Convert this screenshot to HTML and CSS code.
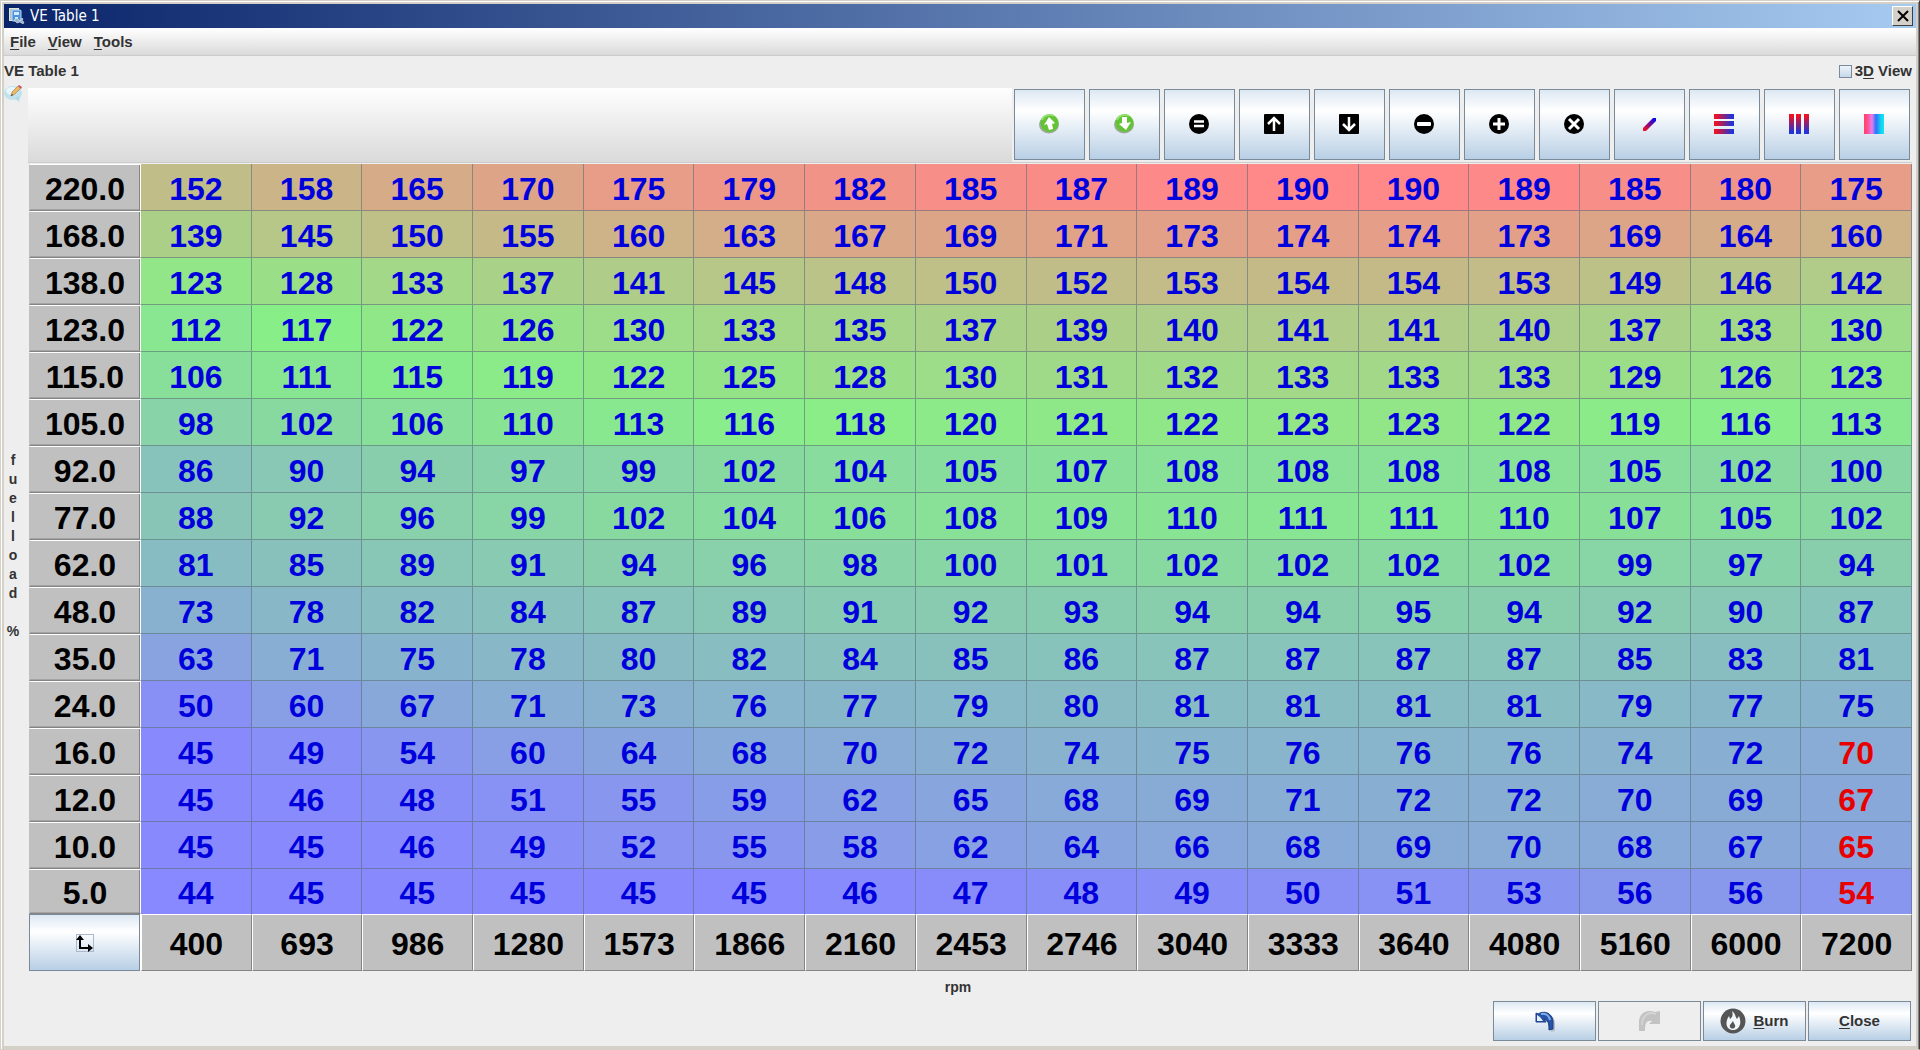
FILE: index.html
```
<!DOCTYPE html>
<html lang="en">
<head>
<meta charset="utf-8">
<title>VE Table 1</title>
<link rel="stylesheet" href="styles.css">
</head>
<body>
<div class="window">
  <header class="titlebar">
    <svg class="app-icon" width="16" height="16" viewBox="0 0 16 16" aria-hidden="true">
      <rect x="0" y="0" width="10" height="13" fill="#dfe6d8"/>
      <rect x="1" y="1" width="8" height="11" fill="#b5c4c0"/>
      <rect x="3" y="2" width="9" height="11" rx="1" fill="#4c92dc" stroke="#b9dcf8"/>
      <path d="M5 4h5v3H5zM6 9h3v2H6z" fill="#d5ebff"/>
      <path d="M5 12l3-2 3 3 2-3 1 1-1 2 2 1-1 2-3-2-3 1z" fill="#9db6cf" stroke="#dfe9f2" stroke-width=".6"/>
    </svg>
    <h1 class="titlebar-text">VE Table 1</h1>
    <button class="window-close" type="button" aria-label="Close window">
      <svg width="12" height="12" viewBox="0 0 12 12"><path d="M1 1l10 10M11 1L1 11" stroke="#000" stroke-width="2"/></svg>
    </button>
  </header>

  <nav class="menubar">
    <button type="button"><u>F</u>ile</button>
    <button type="button"><u>V</u>iew</button>
    <button type="button"><u>T</u>ools</button>
  </nav>

  <div class="heading">
    <h2>VE Table 1</h2>
    <label class="check"><input type="checkbox"><span>3<u>D</u> View</span></label>
  </div>

  <main class="editor">
    <aside class="side">
      <svg class="note-icon" width="19" height="18" viewBox="0 0 19 18" aria-hidden="true">
        <ellipse cx="9" cy="9" rx="9" ry="7" fill="#bfe2ee"/>
        <path d="M11 14l4 4 1-6z" fill="#aedbea"/>
        <ellipse cx="8" cy="7" rx="6" ry="4" fill="#e8f7fb"/>
        <path d="M7 12l1-4 6-6 3 2-6 6z" fill="#edb968" stroke="#9b7444" stroke-width=".6"/>
        <path d="M14 2l1-1 3 2-1 2z" fill="#c8565c"/>
        <path d="M7 12l1-2 1 1z" fill="#333"/>
      </svg>
      <div class="y-label"><span>f</span><span>u</span><span>e</span><span>l</span><span>l</span><span>o</span><span>a</span><span>d</span><span></span><span>%</span></div>
    </aside>

    <div class="grid-area">
      <div class="toolbar">
        <button class="tool" type="button" aria-label="Load table">
          <svg width="20" height="20" viewBox="0 0 20 20"><ellipse cx="10" cy="10.500" rx="10" ry="9" fill="#9aab94"/><ellipse cx="10.500" cy="9" rx="9" ry="8.800" fill="#62c334"/><path d="M3 6a8 7 0 0 1 12-4" fill="none" stroke="#94e070" stroke-width="2"/><path d="M10 3l6 6-2 1-1-1 1 6-4 1-2-6-3 1z" fill="#fff"/></svg>
        </button>
        <button class="tool" type="button" aria-label="Save table">
          <svg width="20" height="20" viewBox="0 0 20 20"><ellipse cx="10" cy="10.500" rx="10" ry="9" fill="#9aab94"/><ellipse cx="10.500" cy="9" rx="9" ry="8.800" fill="#62c334"/><path d="M3 6a8 7 0 0 1 12-4" fill="none" stroke="#94e070" stroke-width="2"/><path d="M8 3h5v6l4-1-5 8-7-6 3-1z" fill="#fff"/></svg>
        </button>
        <button class="tool" type="button" aria-label="Set equal">
          <svg width="20" height="20" viewBox="0 0 20 20"><circle cx="10" cy="10" r="10"/><path d="M5 7.500h10M5 12h10" stroke="#fff" stroke-width="2.500"/></svg>
        </button>
        <button class="tool" type="button" aria-label="Increment">
          <svg width="20" height="20" viewBox="0 0 20 20"><rect width="20" height="20" rx="1"/><path d="M10 17V5M4 10l6-6 6 6" fill="none" stroke="#fff" stroke-width="2.500"/></svg>
        </button>
        <button class="tool" type="button" aria-label="Decrement">
          <svg width="20" height="20" viewBox="0 0 20 20"><rect width="20" height="20" rx="1"/><path d="M10 3v12M4 10l6 6 6-6" fill="none" stroke="#fff" stroke-width="2.500"/></svg>
        </button>
        <button class="tool" type="button" aria-label="Subtract">
          <svg width="20" height="20" viewBox="0 0 20 20"><circle cx="10" cy="10" r="10"/><rect x="3" y="8" width="14" height="4" rx="1" fill="#fff"/></svg>
        </button>
        <button class="tool" type="button" aria-label="Add">
          <svg width="20" height="20" viewBox="0 0 20 20"><circle cx="10" cy="10" r="10"/><path d="M10 4v12M4 10h12" stroke="#fff" stroke-width="3"/></svg>
        </button>
        <button class="tool" type="button" aria-label="Multiply">
          <svg width="20" height="20" viewBox="0 0 20 20"><circle cx="10" cy="10" r="10"/><path d="M5 5l10 10M15 5L5 15" stroke="#fff" stroke-width="3"/></svg>
        </button>
        <button class="tool" type="button" aria-label="Interpolate">
          <svg width="20" height="20" viewBox="0 0 20 20"><defs><linearGradient id="diag" x1="0" y1="1" x2="1" y2="0"><stop offset=".1" stop-color="#f01020"/><stop offset=".9" stop-color="#0c08ee"/></linearGradient></defs><path d="M4 14L14 4h3v3L7 17H4z" fill="url(#diag)"/></svg>
        </button>
        <button class="tool" type="button" aria-label="Interpolate horizontally">
          <svg width="20" height="20" viewBox="0 0 20 20"><defs><linearGradient id="across"><stop offset=".1" stop-color="#ee1222"/><stop offset=".9" stop-color="#2034d8"/></linearGradient></defs><path d="M0 0h20v5H0zM0 7h20v5H0zM0 15h20v5H0z" fill="url(#across)"/></svg>
        </button>
        <button class="tool" type="button" aria-label="Interpolate vertically">
          <svg width="20" height="20" viewBox="0 0 20 20"><defs><linearGradient id="down" x2="0" y2="1"><stop offset=".1" stop-color="#ee1222"/><stop offset=".9" stop-color="#2034d8"/></linearGradient></defs><path d="M0 0h5v20H0zM7 0h5v20H7zM15 0h5v20h-5z" fill="url(#down)"/></svg>
        </button>
        <button class="tool" type="button" aria-label="Smooth">
          <svg width="20" height="20" viewBox="0 0 20 20"><defs><linearGradient id="rainbow"><stop offset="0" stop-color="#ff4468"/><stop offset=".15" stop-color="#ff4a88"/><stop offset=".4" stop-color="#e87cf0"/><stop offset=".6" stop-color="#2874f8"/><stop offset=".85" stop-color="#14d0f4"/><stop offset="1" stop-color="#10e8ee"/></linearGradient></defs><rect width="20" height="20" fill="url(#rainbow)"/></svg>
        </button>
      </div>

      <table class="map">
        <colgroup><col class="axis-col"><col span="16"></colgroup>
        <tbody id="map-body"></tbody>
        <tfoot><tr id="map-foot">
          <th class="corner"><button type="button" aria-label="Edit axes">
            <svg width="18" height="18" viewBox="0 0 18 18"><rect x=".5" y=".5" width="17" height="17" fill="none" stroke="#aab8c8"/><path d="M4 4v10h10" fill="none" stroke="#000" stroke-width="2"/><path d="M0 6l4-5 4 5zM12 10l5 4-5 4z"/></svg>
          </button></th>
        </tr></tfoot>
      </table>
    </div>
  </main>

  <footer class="bottom">
    <div class="x-label">rpm</div>
    <div class="actions">
      <button class="action" type="button" aria-label="Undo">
        <svg width="20" height="21" viewBox="0 0 20 21"><path d="M3 3C9 0 19 2 20 12v8l-4 1c0-6-2-11-8-11l3 3z" fill="#b9bfc6"/><path d="M1 2l2 1c6-4 14-1 15 7v8l-4 1c0-7-1-10-5-11l2 3H1z" fill="#2852a4" stroke="#1d3f8a"/><path d="M6 3c4-1 8 1 9 6" fill="none" stroke="#7fb0ee" stroke-width="2"/><path d="M2 4v6h6L5 6z" fill="#e4f0fc"/></svg>
      </button>
      <button class="action" type="button" aria-label="Redo" disabled>
        <svg width="23" height="22" viewBox="0 0 23 22"><path d="M22 1l-5 1C9-1 1 3 1 12v9h6c0-7 1-11 7-10l-3 3h11z" fill="#c3c3c3"/><path d="M18 4C10 1 4 6 4 15" fill="none" stroke="#d4d4d4" stroke-width="2"/></svg>
      </button>
      <button class="action" type="button">
        <svg width="26" height="26" viewBox="0 0 26 26"><circle cx="13" cy="13" r="12.500" fill="#555"/><path d="M12 3c4 3 3 6 5 8l2-3c2 5 2 10-2 13-3 2-7 1-9-1-3-4-1-9 1-12l1 3c3-2 3-5 2-8z" fill="#f4f7fa"/><path d="M13 13c1 3 3 4 2 6-1 2-4 2-5 0s1-3 3-6z" fill="#555"/></svg>
        <span><u>B</u>urn</span>
      </button>
      <button class="action" type="button"><span><u>C</u>lose</span></button>
    </div>
  </footer>
</div>
<script src="table.js"></script>
</body>
</html>
```
FILE: styles.css
```
* { box-sizing: border-box; }

body {
  margin: 0;
  background: #d4d0c8;
  color: #333;
  font: bold 15px/18px "Liberation Sans", Arial, sans-serif;
}

button { font: inherit; color: inherit; padding: 0; }
u { text-underline-offset: 2px; text-decoration-thickness: 1px; }

.window {
  min-height: 100vh;
  display: flex;
  flex-direction: column;
  padding: 3px;
  border: 1px solid #d4d0c8;
  border-right-color: #404040;
  box-shadow: inset 1px 1px #fff, inset -1px 0 #808080;
}

.titlebar {
  display: flex;
  align-items: center;
  gap: 5px;
  height: 24px;
  padding: 0 3px 0 5px;
  background: linear-gradient(90deg, #0a246a, #a6caf0);
}

.titlebar-text {
  flex: 1;
  margin: 0;
  color: #fff;
  font: 15px/18px "DejaVu Sans Condensed", "DejaVu Sans", sans-serif;
}

.window-close {
  display: grid;
  place-items: center;
  width: 21px;
  height: 20px;
  background: #d4d0c8;
  border: 1px solid #404040;
  border-top-color: #fff;
  border-left-color: #fff;
}

.menubar {
  display: flex;
  gap: 12px;
  height: 28px;
  padding: 0 6px;
  background: linear-gradient(#fff, #dadada);
  border-bottom: 1px solid #ccc;
}

.menubar button { background: none; border: 0; }

.heading {
  display: flex;
  align-items: center;
  justify-content: space-between;
  height: 32px;
  padding: 0 4px 2px 0;
  background: #eee;
}

.heading h2 { margin: 0; font: inherit; }

.check { display: flex; align-items: center; gap: 3px; }

.check input {
  appearance: none;
  width: 13px;
  height: 13px;
  margin: 0;
  border: 1px solid #7a8a99;
  background: linear-gradient(#eef4fa, #c4d8ea);
}

.editor {
  display: flex;
  background: #eee;
}

.side {
  display: flex;
  flex-direction: column;
  width: 24px;
}

.note-icon { margin-top: -4px; }

.y-label {
  flex: 1;
  display: flex;
  flex-direction: column;
  align-items: center;
  justify-content: center;
  padding: 18px 6px 0 0;
  font-size: 14px;
}

.y-label span { height: 19px; line-height: 19px; }

.grid-area {
  flex: 1;
  min-width: 0;
  padding-right: 4px;
}

.toolbar {
  display: flex;
  justify-content: flex-end;
  gap: 4px;
  padding: 1px 2px 2px;
  background: linear-gradient(#fff, #dadada);
  border-bottom: 1px solid #ccc;
}

.tool, .action, .corner button {
  display: flex;
  align-items: center;
  justify-content: center;
  gap: 7px;
  border: 1px solid #7a8a99;
  background: linear-gradient(#dde8f3, #fff 30%, #b8cfe5);
}

.tool {
  width: 71px;
  height: 71px;
  padding: 0 2px 2px 0;
  box-shadow: 0 0 0 2px #eee;
}

.map {
  width: 100%;
  table-layout: fixed;
  border-collapse: separate;
  border-spacing: 0;
  padding: 1px 0 0 1px;
  font: bold 32px/40px "Liberation Sans", Arial, sans-serif;
  text-align: center;
}

.axis-col { width: 112px; }

.map td, .map th { padding: 3px 0 0; height: 47px; }

.map tr:last-child td, .map tbody tr:last-child th { height: 45px; }

.map td {
  color: #0000dc;
  border-right: 1px solid rgba(90, 110, 120, .6);
  border-bottom: 1px solid rgba(90, 110, 120, .6);
}

.map tr:last-child td { border-bottom: 0; }

.map .flagged { color: #e80000; }

.map th {
  color: #000;
  background: #c0c0c0;
  border: 1px solid #848484;
  border-top-color: #fff;
  border-left-color: #fff;
}

.map tbody th {
  padding-top: 2px;
  border-left-color: #c0c0c0;
  box-shadow: inset -1px 0 #848484, inset 0 -1px #a4a4a4;
  border-right-color: #fff;
}

.map tfoot th { height: 57px; padding-top: 2px; }

.map .corner { padding: 0; border: 0; border-right: 1px solid #fff; }

.corner button { width: 100%; height: 57px; }

.bottom {
  flex: 1;
  padding: 7px 4px 5px 0;
  background: #eee;
}

.x-label { padding-bottom: 5px; text-align: center; font-size: 14px; }

.actions {
  display: flex;
  justify-content: flex-end;
  gap: 2px;
  padding-right: 1px;
}

.action { width: 103px; height: 40px; }

.action:disabled { background: #eee; }
```
FILE: table.js
```
const rpm = [400, 693, 986, 1280, 1573, 1866, 2160, 2453, 2746, 3040, 3333, 3640, 4080, 5160, 6000, 7200];

const rows = [
  ["220.0", 152, 158, 165, 170, 175, 179, 182, 185, 187, 189, 190, 190, 189, 185, 180, 175],
  ["168.0", 139, 145, 150, 155, 160, 163, 167, 169, 171, 173, 174, 174, 173, 169, 164, 160],
  ["138.0", 123, 128, 133, 137, 141, 145, 148, 150, 152, 153, 154, 154, 153, 149, 146, 142],
  ["123.0", 112, 117, 122, 126, 130, 133, 135, 137, 139, 140, 141, 141, 140, 137, 133, 130],
  ["115.0", 106, 111, 115, 119, 122, 125, 128, 130, 131, 132, 133, 133, 133, 129, 126, 123],
  ["105.0", 98, 102, 106, 110, 113, 116, 118, 120, 121, 122, 123, 123, 122, 119, 116, 113],
  ["92.0", 86, 90, 94, 97, 99, 102, 104, 105, 107, 108, 108, 108, 108, 105, 102, 100],
  ["77.0", 88, 92, 96, 99, 102, 104, 106, 108, 109, 110, 111, 111, 110, 107, 105, 102],
  ["62.0", 81, 85, 89, 91, 94, 96, 98, 100, 101, 102, 102, 102, 102, 99, 97, 94],
  ["48.0", 73, 78, 82, 84, 87, 89, 91, 92, 93, 94, 94, 95, 94, 92, 90, 87],
  ["35.0", 63, 71, 75, 78, 80, 82, 84, 85, 86, 87, 87, 87, 87, 85, 83, 81],
  ["24.0", 50, 60, 67, 71, 73, 76, 77, 79, 80, 81, 81, 81, 81, 79, 77, 75],
  ["16.0", 45, 49, 54, 60, 64, 68, 70, 72, 74, 75, 76, 76, 76, 74, 72, 70],
  ["12.0", 45, 46, 48, 51, 55, 59, 62, 65, 68, 69, 71, 72, 72, 70, 69, 67],
  ["10.0", 45, 45, 46, 49, 52, 55, 58, 62, 64, 66, 68, 69, 70, 68, 67, 65],
  ["5.0", 44, 45, 45, 45, 45, 45, 46, 47, 48, 49, 50, 51, 53, 56, 56, 54]
];

const LOW = 44, MID = 117, HIGH = 190;

// Blue at the low end, green in the middle, red at the high end.
function heat(value) {
  const low = value <= MID;
  const from = low ? [136, 136, 255] : [136, 238, 136];
  const to = low ? [136, 238, 136] : [255, 136, 136];
  const t = low ? (value - LOW) / (MID - LOW) : (value - MID) / (HIGH - MID);
  return `rgb(${from.map((c, i) => Math.round(c + (to[i] - c) * t)).join(",")})`;
}

const body = document.getElementById("map-body");
rows.forEach(([load, ...values], r) => {
  const tr = body.insertRow();
  const th = document.createElement("th");
  th.scope = "row";
  th.textContent = load;
  tr.append(th);
  values.forEach((value, c) => {
    const td = tr.insertCell();
    td.textContent = value;
    td.style.backgroundColor = heat(value);
    if (c === 15 && r >= 12) td.className = "flagged";
  });
});

const foot = document.getElementById("map-foot");
rpm.forEach(value => {
  const th = document.createElement("th");
  th.scope = "col";
  th.textContent = value;
  foot.append(th);
});
```
